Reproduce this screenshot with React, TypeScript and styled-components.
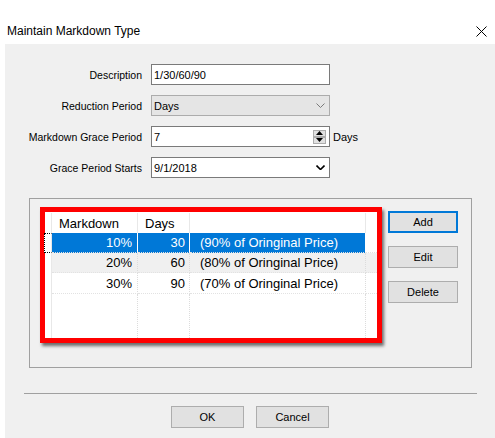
import React from 'react';
import styled, { createGlobalStyle } from 'styled-components';

const GlobalStyle = createGlobalStyle`
  html, body {
    margin: 0;
    padding: 0;
    background: #ffffff;
  }
  body {
    font-family: "Liberation Sans", Arial, sans-serif;
    color: #000;
  }
`;

const Window = styled.div`
  width: 495px;
  height: 438px;
  display: flex;
  flex-direction: column;
  background: #fff;
  overflow: hidden;
`;

const TitleBar = styled.div`
  height: 44px;
  box-sizing: border-box;
  padding: 18px 8px 0 7px;
  display: flex;
  align-items: center;
  justify-content: space-between;
  font-size: 12px;
`;

const Body = styled.div`
  flex: 1;
  margin-left: 5px;
  background: #f0f0f0;
  display: flex;
  flex-direction: column;
  font-size: 11px;
`;

const Form = styled.div`
  display: grid;
  grid-template-columns: 146px 179px auto;
  grid-auto-rows: 21px;
  row-gap: 10px;
  padding-top: 20px;
  align-items: center;
`;

const Label = styled.div`
  text-align: right;
  padding-right: 9px;
  white-space: nowrap;
  font-size: 10.5px;
`;

const Unit = styled.div`
  padding-left: 3px;
`;

const Field = styled.div<{ $disabled?: boolean }>`
  height: 21px;
  box-sizing: border-box;
  border: 1px solid ${p => (p.$disabled ? '#acacac' : '#7a7a7a')};
  background: ${p => (p.$disabled ? '#e5e5e5' : '#ffffff')};
  padding: 0 4px 0 2px;
  display: flex;
  align-items: center;
  justify-content: space-between;
`;

const Spinner = styled.div`
  display: flex;
  flex-direction: column;
  margin-right: -1px;
`;

const SpinButton = styled.div`
  width: 13px;
  height: 7px;
  box-sizing: border-box;
  background: #e1e1e1;
  border: 1px solid #adadad;
  display: flex;
  align-items: center;
  justify-content: center;
`;

const Group = styled.div`
  margin: 20px 0 0 24px;
  width: 443px;
  height: 170px;
  box-sizing: border-box;
  border: 1px solid #a0a0a0;
  padding: 8px 0 0 10px;
  display: flex;
  align-items: flex-start;
`;

const RedFrame = styled.div`
  width: 342px;
  height: 136px;
  box-sizing: border-box;
  border: 5px solid #ff0000;
  background: #fff;
  box-shadow: 2px 3px 3px rgba(0, 0, 0, 0.55);
`;

const Grid = styled.div`
  height: 100%;
  box-sizing: border-box;
  padding-top: 1px;
  display: grid;
  grid-template-columns: 7px 86px 52px 176px 1fr;
  grid-template-rows: 20px 20px 20px 21px 1fr;
  font-size: 13px;
`;

type CellKind = 'header' | 'selected' | 'alt' | 'plain' | 'filler';

const bgFor = (k: CellKind) =>
  k === 'selected' ? '#0078d7' : k === 'alt' ? '#f0f0f0' : '#ffffff';

const Cell = styled.div<{ $kind: CellKind; $align?: 'left' | 'right'; $last?: boolean; $pad?: number }>`
  box-sizing: border-box;
  display: flex;
  align-items: center;
  justify-content: ${p => (p.$align === 'right' ? 'flex-end' : 'flex-start')};
  padding: ${p => (p.$align === 'right' ? `0 ${p.$pad ?? 5}px 0 0` : `0 0 0 ${p.$pad ?? 7}px`)};
  white-space: nowrap;
  background: ${p => bgFor(p.$kind)};
  color: ${p => (p.$kind === 'selected' ? '#ffffff' : '#000000')};
  border-right: ${p =>
    p.$last
      ? 'none'
      : p.$kind === 'selected'
      ? '1px solid #ffffff'
      : p.$kind === 'header'
      ? '1px solid #e8e8e8'
      : '1px dotted #dcdcdc'};
  border-bottom: ${p =>
    p.$kind === 'alt' || p.$kind === 'plain' || p.$kind === 'selected'
      ? '1px dotted #e2e2e2'
      : 'none'};
`;

const RowHead = styled.div<{ $focus?: boolean }>`
  box-sizing: border-box;
  background: #fff;
  border-right: 1px solid #e8e8e8;
  border-left: ${p => (p.$focus ? '1px dotted #000' : 'none')};
  border-top: ${p => (p.$focus ? '1px dotted #000' : 'none')};
  border-bottom: ${p => (p.$focus ? '1px dotted #000' : 'none')};
  margin-left: ${p => (p.$focus ? '-1px' : '0')};
`;

const SideButtons = styled.div`
  margin: 4px 0 0 6px;
  display: flex;
  flex-direction: column;
  gap: 13px;
`;

const Button = styled.div<{ $w: number; $default?: boolean }>`
  width: ${p => p.$w}px;
  height: 22px;
  box-sizing: border-box;
  background: #e1e1e1;
  border: ${p => (p.$default ? '2px solid #0078d7' : '1px solid #adadad')};
  display: flex;
  align-items: center;
  justify-content: center;
  font-size: 11px;
`;

const Separator = styled.div`
  margin: 25px 0 0 19px;
  width: 453px;
  height: 1px;
  background: #a0a0a0;
`;

const Footer = styled.div`
  margin-top: 12px;
  display: flex;
  justify-content: center;
  gap: 12px;
`;

const Chevron = ({ bold }: { bold?: boolean }) => (
  <svg width="9" height="5" viewBox="0 0 9 5">
    <path
      d="M0.5 0.5 L4.5 4.5 L8.5 0.5"
      fill="none"
      stroke={bold ? '#000' : '#7a7a7a'}
      strokeWidth={bold ? 1.6 : 1}
    />
  </svg>
);

const Tri = ({ up }: { up?: boolean }) => (
  <svg width="7" height="4" viewBox="0 0 7 4">
    <path d={up ? 'M0 4 L3.5 0 L7 4 Z' : 'M0 0 L3.5 4 L7 0 Z'} fill="#000" />
  </svg>
);

const rows = [
  { md: '10%', days: '30', note: '(90% of Oringinal Price)', kind: 'selected' as CellKind },
  { md: '20%', days: '60', note: '(80% of Oringinal Price)', kind: 'alt' as CellKind },
  { md: '30%', days: '90', note: '(70% of Oringinal Price)', kind: 'plain' as CellKind },
];

export default function App() {
  return (
    <Window>
      <GlobalStyle />
      <TitleBar>
        <span>Maintain Markdown Type</span>
        <svg width="11" height="11" viewBox="0 0 11 11">
          <path d="M0.5 0.5 L10.5 10.5 M10.5 0.5 L0.5 10.5" stroke="#000" strokeWidth="1" />
        </svg>
      </TitleBar>
      <Body>
        <Form>
          <Label>Description</Label>
          <Field>1/30/60/90</Field>
          <span />

          <Label>Reduction Period</Label>
          <Field $disabled>
            <span>Days</span>
            <Chevron />
          </Field>
          <span />

          <Label>Markdown Grace Period</Label>
          <Field>
            <span>7</span>
            <Spinner>
              <SpinButton><Tri up /></SpinButton>
              <SpinButton><Tri /></SpinButton>
            </Spinner>
          </Field>
          <Unit>Days</Unit>

          <Label>Grace Period Starts</Label>
          <Field>
            <span>9/1/2018</span>
            <Chevron bold />
          </Field>
          <span />
        </Form>

        <Group>
          <RedFrame>
            <Grid>
              <RowHead />
              <Cell $kind="header">Markdown</Cell>
              <Cell $kind="header">Days</Cell>
              <Cell $kind="header" />
              <Cell $kind="header" $last />
              {rows.map((r, i) => (
                <React.Fragment key={i}>
                  <RowHead $focus={r.kind === 'selected'} />
                  <Cell $kind={r.kind} $align="right" $pad={5}>{r.md}</Cell>
                  <Cell $kind={r.kind} $align="right" $pad={4}>{r.days}</Cell>
                  <Cell $kind={r.kind} $pad={10}>{r.note}</Cell>
                  <Cell $kind={r.kind === 'selected' ? 'plain' : r.kind} $last />
                </React.Fragment>
              ))}
              <RowHead />
              <Cell $kind="filler" />
              <Cell $kind="filler" />
              <Cell $kind="filler" />
              <Cell $kind="filler" $last />
            </Grid>
          </RedFrame>
          <SideButtons>
            <Button $w={70} $default>Add</Button>
            <Button $w={70}>Edit</Button>
            <Button $w={70}>Delete</Button>
          </SideButtons>
        </Group>

        <Separator />
        <Footer>
          <Button $w={73}>OK</Button>
          <Button $w={73}>Cancel</Button>
        </Footer>
      </Body>
    </Window>
  );
}
